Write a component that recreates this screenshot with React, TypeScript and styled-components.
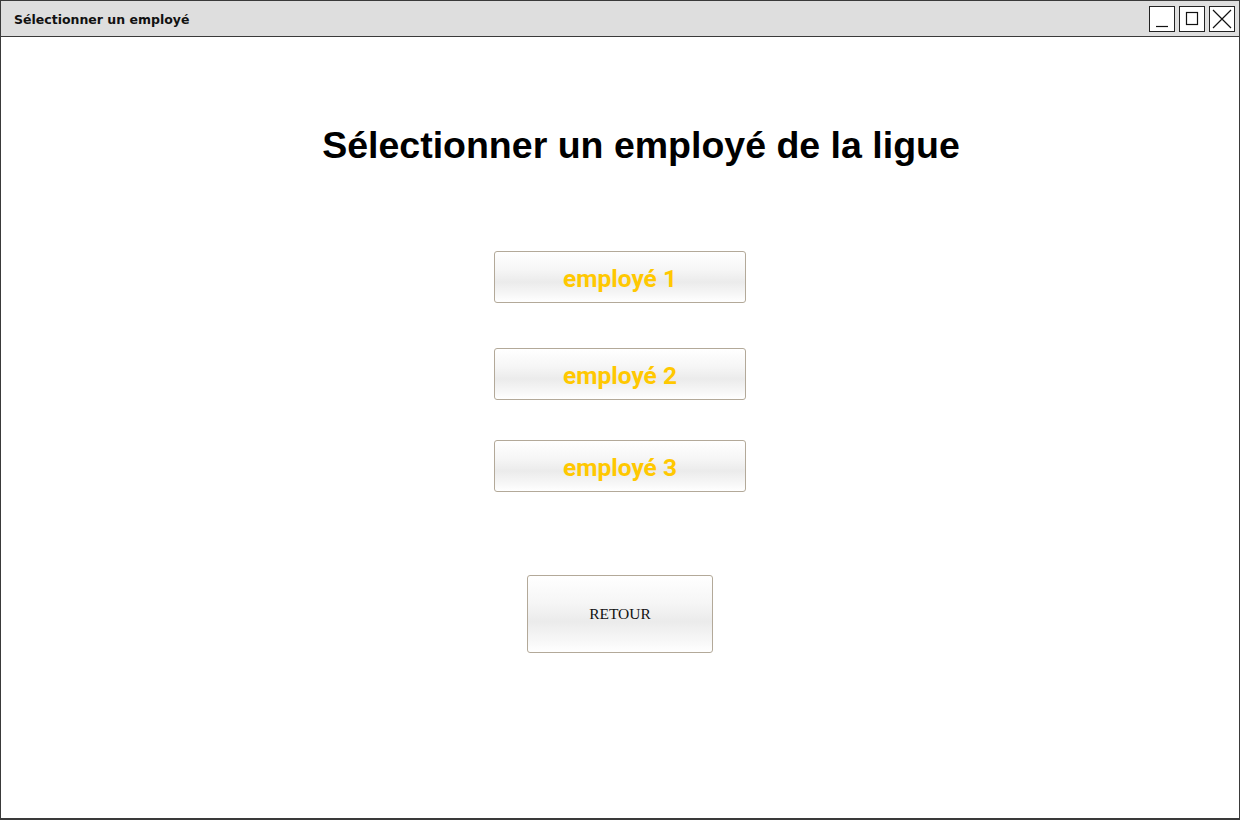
import styled, { createGlobalStyle } from "styled-components";

const GlobalStyle = createGlobalStyle`
  html, body {
    margin: 0;
    padding: 0;
    background: #ffffff;
  }
  * {
    box-sizing: border-box;
  }
`;

const Window = styled.div`
  width: 1240px;
  height: 820px;
  border: 1px solid #3a3a3a;
  border-bottom-width: 2px;
  display: flex;
  flex-direction: column;
  background: #ffffff;
  overflow: hidden;
`;

const TitleBar = styled.header`
  height: 36px;
  flex: none;
  background: #dedede;
  border-bottom: 1px solid #3a3a3a;
  display: flex;
  align-items: center;
  justify-content: space-between;
  padding: 0 4px 0 13px;
`;

const TitleText = styled.span`
  font-family: "Comic Sans MS", "DejaVu Sans", sans-serif;
  font-weight: bold;
  font-size: 12.5px;
  color: #111;
  margin-top: 2px;
`;

const Controls = styled.div`
  display: flex;
  gap: 4px;
  margin-top: 1px;
`;

const ControlBox = styled.div`
  width: 26px;
  height: 26px;
  border: 1px solid #222;
  background: #ffffff;
  display: flex;
  align-items: center;
  justify-content: center;
`;

const Content = styled.main`
  flex: 1;
  display: flex;
  flex-direction: column;
  align-items: center;
`;

const Heading = styled.h1`
  margin: 87px 0 0;
  padding-left: 42px;
  font-family: "Liberation Sans", Arial, sans-serif;
  font-weight: bold;
  font-size: 37.5px;
  line-height: 42px;
  color: #000;
`;

const EmployeeList = styled.div`
  display: flex;
  flex-direction: column;
  align-items: center;
  margin-top: 85px;
`;

const Button = styled.button<{ $w: number; $h: number }>`
  width: ${(p) => p.$w}px;
  height: ${(p) => p.$h}px;
  border: 1px solid #b3a999;
  border-radius: 3px;
  background: linear-gradient(
    to bottom,
    #ffffff 0%,
    #f6f6f6 35%,
    #ebebeb 60%,
    #f7f7f7 85%,
    #ffffff 100%
  );
  cursor: pointer;
  padding: 0;
`;

const EmployeeButton = styled(Button)<{ $gap: number }>`
  margin-top: ${(p) => p.$gap}px;
  padding-top: 3px;
  font-family: Roboto, "Liberation Sans", sans-serif;
  font-weight: bold;
  font-size: 24.5px;
  color: #ffc800;
`;

const BackButton = styled(Button)`
  margin-top: 83px;
  font-family: "Liberation Serif", "Times New Roman", serif;
  font-size: 15.5px;
  color: #111;
`;

const employees = [
  { name: "employé 1", gap: 0 },
  { name: "employé 2", gap: 45 },
  { name: "employé 3", gap: 40 },
];

function App() {
  return (
    <>
      <GlobalStyle />
      <Window>
        <TitleBar>
          <TitleText>Sélectionner un employé</TitleText>
          <Controls>
            <ControlBox>
              <svg width="24" height="24" viewBox="0 0 24 24">
                <line x1="6" y1="19.5" x2="18" y2="19.5" stroke="#111" strokeWidth="1.2" />
              </svg>
            </ControlBox>
            <ControlBox>
              <svg width="24" height="24" viewBox="0 0 24 24">
                <rect x="6.5" y="5.5" width="11" height="12" fill="none" stroke="#111" strokeWidth="1.2" />
              </svg>
            </ControlBox>
            <ControlBox>
              <svg width="24" height="24" viewBox="0 0 24 24">
                <path d="M3 3 L21 21 M21 3 L3 21" stroke="#111" strokeWidth="1.2" />
              </svg>
            </ControlBox>
          </Controls>
        </TitleBar>
        <Content>
          <Heading>Sélectionner un employé de la ligue</Heading>
          <EmployeeList>
            {employees.map((e) => (
              <EmployeeButton key={e.name} $w={252} $h={52} $gap={e.gap}>
                {e.name}
              </EmployeeButton>
            ))}
            <BackButton $w={186} $h={78}>RETOUR</BackButton>
          </EmployeeList>
        </Content>
      </Window>
    </>
  );
}

export default App;
